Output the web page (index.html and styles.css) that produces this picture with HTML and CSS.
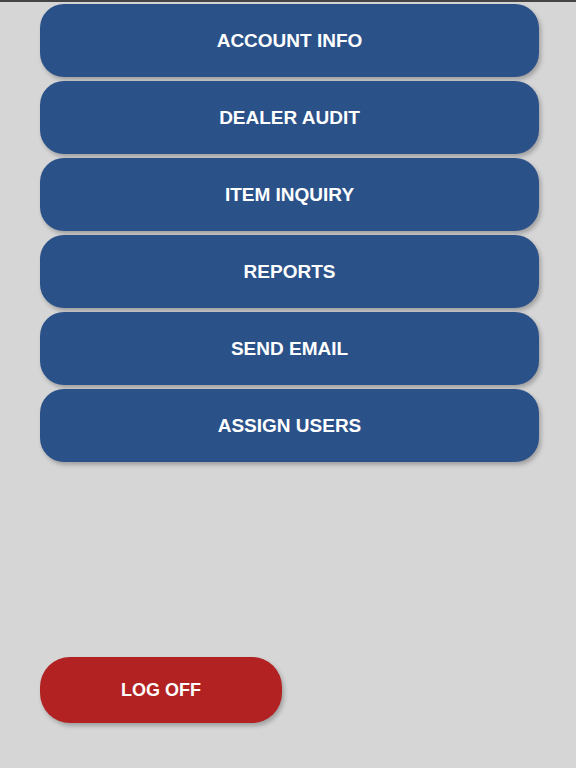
FILE: index.html
```html
<!DOCTYPE html>
<html lang="en">

    <head>
        <meta charset="UTF-8">
        <meta name="viewport" content="width=device-width, initial-scale=1.0">
        <title>Menu</title>
        <link rel="stylesheet" href="styles.css">
    </head>

    <body>

        <div class="main-container">

            <div class="menu">
                <button class="menu-button">ACCOUNT INFO</button>
                <button class="menu-button">DEALER AUDIT</button>
                <button class="menu-button">ITEM INQUIRY</button>
                <button class="menu-button">REPORTS</button>
                <button class="menu-button">SEND EMAIL</button>
                <button class="menu-button">ASSIGN USERS</button>
            </div>

            <button class="logoff-button">LOG OFF</button>

        </div>

    </body>

</html>
```

FILE: styles.css
```css
body {
    background-color: #D6D6D6;
    font-family: "Liberation Sans", Arial, Helvetica, sans-serif;
    margin: 0;
    padding: 0;
    border-top: 2px solid #444;
    height: 766px;
    overflow: hidden;
}

.main-container {
    display: flex;
    flex-direction: column;
    padding: 2px 37px 0 40px;
}

.menu {
    display: flex;
    flex-direction: column;
    gap: 4px;
}

.menu-button,
.logoff-button {
    border: none;
    color: #FFFFFF;
    font-family: inherit;
    font-weight: bold;
    cursor: pointer;
    box-shadow: 2px 3px 4px rgba(0, 0, 0, 0.25);
}

.menu-button {
    height: 73px;
    width: 100%;
    padding-top: 2px;
    font-size: 19px;
    background-color: #2B5189;
    border-radius: 24px;
}

.logoff-button {
    margin-top: 195px;
    width: 242px;
    height: 66px;
    font-size: 18px;
    background-color: #B22222;
    border-radius: 30px;
}
```
